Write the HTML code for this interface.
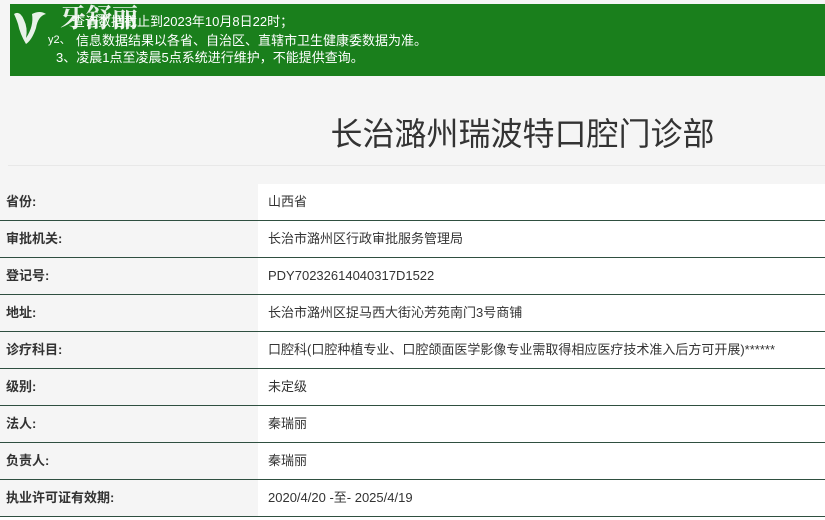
<!DOCTYPE html>
<html><head><meta charset="utf-8"><style>
body{margin:0;width:825px;height:520px;overflow:hidden;background:#fff;font-family:"Liberation Sans","Noto Sans CJK SC",sans-serif;position:relative}
.top{position:absolute;left:0;top:0;width:825px;height:184px;background:#f5f5f5}
.banner{position:absolute;left:10px;top:4px;width:815px;height:72px;background:#1a7f1c;color:#fff;font-size:13px;line-height:19px}
.banner div{position:absolute;white-space:nowrap}
.logo{position:absolute;left:50px;top:3px;font-family:"Noto Serif CJK SC",serif;font-size:26px;font-weight:bold;color:#fff;opacity:.9}
.title{position:absolute;left:0;width:1045px;top:109px;text-align:center;font-size:32px;color:#333}
.sep{position:absolute;left:8px;right:0;top:165px;height:1px;background:#e8e8e8}
.row{position:absolute;left:0;width:825px;height:36px;border-bottom:1px solid #2f4f40;font-size:13px;color:#333}
.row .l{position:absolute;left:0;top:0;width:258px;height:36px;background:#f5f5f5;font-weight:bold;padding-left:6px;box-sizing:border-box;line-height:36px}
.row .v{position:absolute;left:268px;top:0;line-height:36px;white-space:nowrap}
</style></head><body>
<div class="top"></div>
<div class="banner">
<svg style="position:absolute;left:0;top:2px" width="40" height="40" viewBox="0 0 40 40"><path d="M4 8 Q10 4 14 14 Q18 22 16 32 Q24 20 22 8 Q30 4 36 8 Q28 10 26 22 Q22 34 16 38 Q10 28 8 18 Q6 12 4 8Z" fill="#fff" opacity=".9"/></svg>
<div style="left:62px;top:8px">查询数据截止到2023年10月8日22时；</div>
<div class="logo">牙舒丽</div>
<div style="left:38px;top:27px;font-size:11px">y2、</div>
<div style="left:66px;top:27px">信息数据结果以各省、自治区、直辖市卫生健康委数据为准。</div>
<div style="left:46px;top:44px">3、凌晨1点至凌晨5点系统进行维护，不能提供查询。</div>
</div>
<div class="title">长治潞州瑞波特口腔门诊部</div>
<div class="sep"></div>
<div class="row" style="top:184px"><div class="l">省份:</div><div class="v">山西省</div></div>
<div class="row" style="top:221px"><div class="l">审批机关:</div><div class="v">长治市潞州区行政审批服务管理局</div></div>
<div class="row" style="top:258px"><div class="l">登记号:</div><div class="v">PDY70232614040317D1522</div></div>
<div class="row" style="top:295px"><div class="l">地址:</div><div class="v">长治市潞州区捉马西大街沁芳苑南门3号商铺</div></div>
<div class="row" style="top:332px"><div class="l">诊疗科目:</div><div class="v">口腔科(口腔种植专业、口腔颌面医学影像专业需取得相应医疗技术准入后方可开展)******</div></div>
<div class="row" style="top:369px"><div class="l">级别:</div><div class="v">未定级</div></div>
<div class="row" style="top:406px"><div class="l">法人:</div><div class="v">秦瑞丽</div></div>
<div class="row" style="top:443px"><div class="l">负责人:</div><div class="v">秦瑞丽</div></div>
<div class="row" style="top:480px"><div class="l">执业许可证有效期:</div><div class="v">2020/4/20 -至- 2025/4/19</div></div>
</body></html>
